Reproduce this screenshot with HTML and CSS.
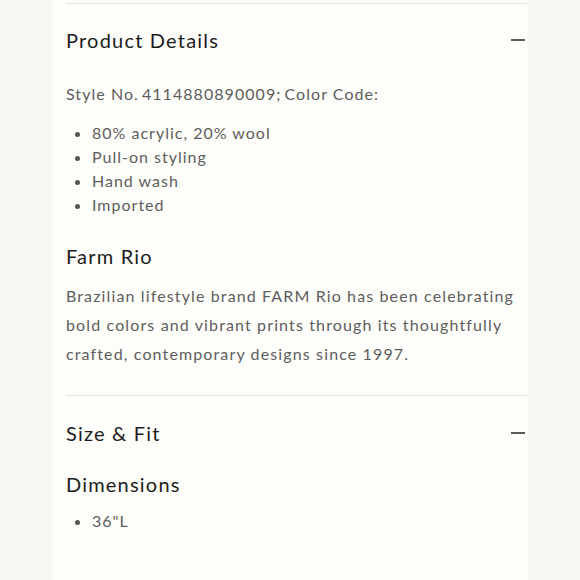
FILE: index.html
```html
<!DOCTYPE html>
<html>
<head>
<meta charset="utf-8">
<link rel="stylesheet" href="styles.css">
</head>
<body>
<div class="panel">
  <section class="acc acc-first">
    <div class="acc-head">
      <h2 class="acc-title">Product Details</h2>
      <span class="minus"></span>
    </div>
    <p class="style-no">Style No.&thinsp;4114880890009;&thinsp;Color Code:</p>
    <ul class="bullets">
      <li>80% acrylic, 20% wool</li>
      <li>Pull-on styling</li>
      <li>Hand wash</li>
      <li>Imported</li>
    </ul>
    <h3 class="sub">Farm Rio</h3>
    <p class="desc">Brazilian lifestyle brand FARM Rio has been celebrating bold colors and vibrant prints through its thoughtfully crafted, contemporary designs since 1997.</p>
  </section>
  <section class="acc">
    <div class="acc-head">
      <h2 class="acc-title">Size &amp; Fit</h2>
      <span class="minus"></span>
    </div>
    <h3 class="sub sub-dim">Dimensions</h3>
    <ul class="bullets bullets-dim">
      <li>36"L</li>
    </ul>
  </section>
</div>
</body>
</html>
```
FILE: styles.css
```css
html, body {
  margin: 0;
  padding: 0;
  background: #f7f7f3;
}
body {
  font-family: Lato, "Noto Sans", sans-serif;
  height: 580px;
  overflow: hidden;
}
.panel {
  margin-left: 52px;
  width: 476px;
  min-height: 580px;
  background: #fdfdf9;
  padding: 3px 1px 0 14px;
  box-sizing: border-box;
}
.acc {
  border-top: 1px solid #e3e3df;
  padding-bottom: 27px;
}
.acc-head {
  display: flex;
  align-items: center;
  justify-content: space-between;
  padding-top: 24px;
}
.acc + .acc .acc-head {
  padding-top: 25px;
}
.acc-title {
  margin: 0;
  font-size: 20px;
  line-height: 24px;
  font-weight: 400;
  color: #1c1c1c;
  letter-spacing: 1.2px;
}
.minus {
  width: 14px;
  height: 2px;
  background: #5a5a5a;
  margin-right: 2px;
}
.style-no {
  margin: 30px 0 0;
  font-size: 16px;
  line-height: 24px;
  color: #5e5e5e;
  letter-spacing: 1.05px;
}
.bullets {
  margin: 15px 0 0;
  padding: 0 0 0 26px;
  font-size: 16px;
  line-height: 24px;
  color: #5e5e5e;
  letter-spacing: 1px;
}
.bullets li::marker {
  color: #555;
}
.sub {
  margin: 27px 0 0;
  font-size: 20px;
  line-height: 24px;
  font-weight: 400;
  color: #1c1c1c;
  letter-spacing: 1.2px;
}
.sub-dim {
  margin-top: 27px;
}
.bullets-dim {
  margin-top: 13px;
}
.desc {
  margin: 13px 0 0;
  font-size: 16px;
  line-height: 29px;
  color: #5e5e5e;
  letter-spacing: 1.13px;
}
```
